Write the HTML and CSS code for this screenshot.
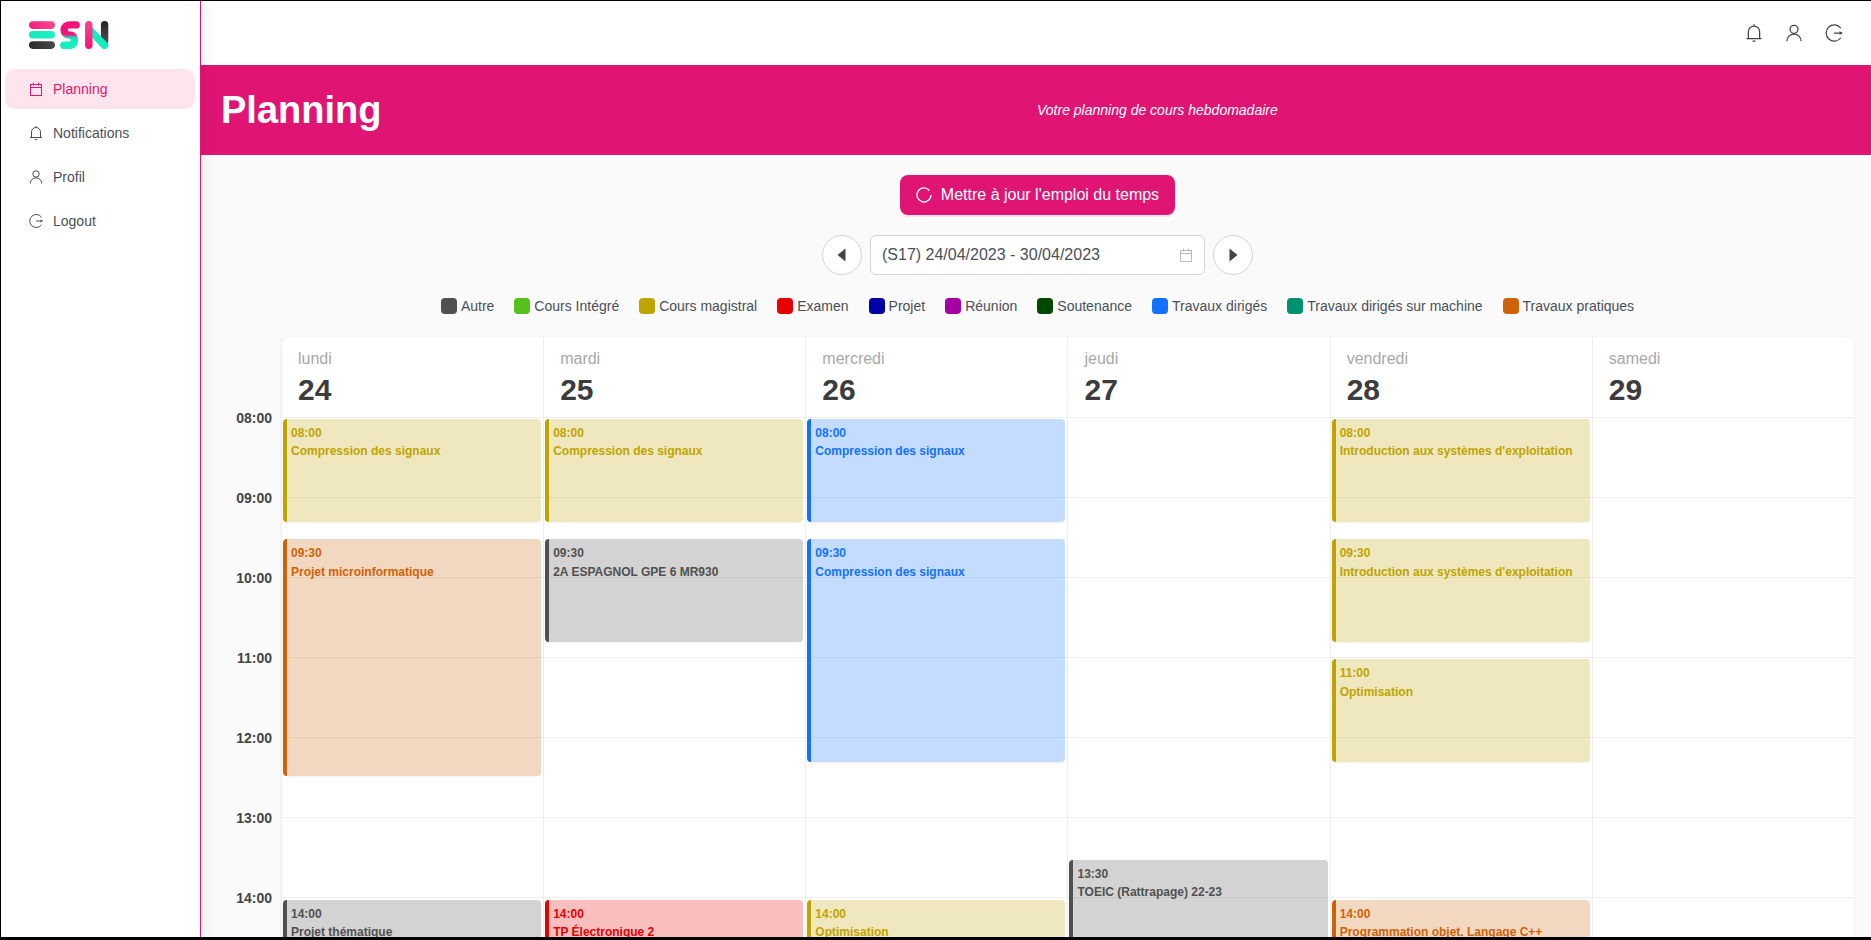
FILE: index.html
```html
<!DOCTYPE html>
<html lang="fr">
<head>
<meta charset="utf-8">
<title>Planning</title>
<link rel="stylesheet" href="styles.css">
</head>
<body>
<div class="frame">
  <aside class="sidebar">
    <div class="logo">
      <svg width="80" height="29" viewBox="0 0 80 29">
        <defs>
          <linearGradient id="gp" x1="0" x2="1" y1="0" y2="0"><stop offset="0" stop-color="#f4207f"/><stop offset="1" stop-color="#f5478f"/></linearGradient>
          <linearGradient id="gt" x1="0" x2="1" y1="0" y2="0"><stop offset="0" stop-color="#14e8bb"/><stop offset="1" stop-color="#1cf0c8"/></linearGradient>
          <linearGradient id="gd" x1="0" x2="1" y1="0" y2="0"><stop offset="0" stop-color="#2a2a2a"/><stop offset="1" stop-color="#4a4a4a"/></linearGradient>
          <linearGradient id="gs" gradientUnits="userSpaceOnUse" x1="40" x2="40" y1="2" y2="27"><stop offset="0" stop-color="#f5127a"/><stop offset=".45" stop-color="#f5127a"/><stop offset=".6" stop-color="#14e8bb"/><stop offset="1" stop-color="#14f0c4"/></linearGradient>
          <linearGradient id="gn" gradientUnits="userSpaceOnUse" x1="60" x2="60" y1="0" y2="28"><stop offset="0" stop-color="#f5478f"/><stop offset="1" stop-color="#f5127a"/></linearGradient>
          <linearGradient id="gk" gradientUnits="userSpaceOnUse" x1="76" x2="76" y1="0" y2="24"><stop offset="0" stop-color="#222"/><stop offset="1" stop-color="#555"/></linearGradient>
        </defs>
        <rect x="0" y="0.3" width="26" height="7.6" rx="3.8" fill="url(#gp)"/>
        <rect x="0" y="10" width="26" height="7.6" rx="3.8" fill="url(#gt)"/>
        <rect x="0" y="20.3" width="26" height="7.6" rx="3.8" fill="url(#gd)"/>
        <path d="M47.2 3.9 H40.2 a5.1 5.1 0 0 0 0 10.2 h1.6 a5.4 5.4 0 0 1 0 10.2 H34.8" fill="none" stroke="url(#gs)" stroke-width="7.4" stroke-linecap="round"/>
        <path d="M75.6 3.8 V20" stroke="url(#gk)" stroke-width="7.4" stroke-linecap="round"/>
        <path d="M59.8 8 L75.6 24.3" stroke="#16ecc2" stroke-width="7.4" stroke-linecap="round"/>
        <path d="M59.8 3.8 V24.3" stroke="url(#gn)" stroke-width="7.4" stroke-linecap="round"/>
      </svg>
    </div>
    <nav class="nav">
      <a class="nav-item active">
        <svg class="ico" viewBox="0 0 16 16"><rect x="2.5" y="3.5" width="11" height="11"/><path d="M2.5 6.5h11M5.5 1.5v3M10.5 1.5v3"/></svg>
        <span>Planning</span>
      </a>
      <a class="nav-item">
        <svg class="ico" viewBox="0 0 16 16"><path d="M3.5 12.5V7a4.5 4.5 0 0 1 9 0v5.5M2 12.5h12M6.8 14.5h2.4M8 1v1.5"/></svg>
        <span>Notifications</span>
      </a>
      <a class="nav-item">
        <svg class="ico" viewBox="0 0 16 16"><circle cx="8" cy="5" r="3.2"/><path d="M2.3 14.5a5.7 5.7 0 0 1 11.4 0"/></svg>
        <span>Profil</span>
      </a>
      <a class="nav-item">
        <svg class="ico" viewBox="0 0 16 16"><path d="M13.5 4.2A6.5 6.5 0 1 0 13.5 11.8M8 8h6.5"/><path d="M12.5 6.5 14.8 8l-2.3 1.5z" class="solid"/></svg>
        <span>Logout</span>
      </a>
    </nav>
  </aside>
  <main class="main">
    <header class="topbar">
      <svg class="ico top-ico" viewBox="0 0 16 16"><path d="M3.5 12.5V7a4.5 4.5 0 0 1 9 0v5.5M2 12.5h12M6.8 14.5h2.4M8 1v1.5"/></svg>
      <svg class="ico top-ico" viewBox="0 0 16 16"><circle cx="8" cy="5" r="3.2"/><path d="M2.3 14.5a5.7 5.7 0 0 1 11.4 0"/></svg>
      <svg class="ico top-ico" viewBox="0 0 16 16"><path d="M13.5 4.2A6.5 6.5 0 1 0 13.5 11.8M8 8h6.5"/><path d="M12.5 6.5 14.8 8l-2.3 1.5z" class="solid"/></svg>
    </header>
    <section class="banner">
      <h1>Planning</h1>
      <p>Votre planning de cours hebdomadaire</p>
    </section>
    <section class="content">
      <button class="update">
        <svg class="ico upd-ico" viewBox="0 0 16 16"><path d="M13.4 3.5A7 7 0 1 0 15 8"/></svg>
        <span>Mettre à jour l'emploi du temps</span>
      </button>
      <div class="week">
        <button class="round"><svg width="10" height="14" viewBox="0 0 10 14"><path d="M8.5 0.5v13L0.5 7z" fill="#444"/></svg></button>
        <div class="picker">
          <span>(S17) 24/04/2023 - 30/04/2023</span>
          <svg class="ico cal-ico" viewBox="0 0 16 16"><rect x="2.5" y="3.5" width="11" height="11"/><path d="M2.5 6.5h11M5.5 1.5v3M10.5 1.5v3"/></svg>
        </div>
        <button class="round"><svg width="10" height="14" viewBox="0 0 10 14"><path d="M1.5 0.5v13L9.5 7z" fill="#444"/></svg></button>
      </div>
      <ul class="legend">
        <li><i class="c-autre"></i>Autre</li>
        <li><i class="c-integre"></i>Cours Intégré</li>
        <li><i class="c-cm"></i>Cours magistral</li>
        <li><i class="c-exam"></i>Examen</li>
        <li><i class="c-projet"></i>Projet</li>
        <li><i class="c-reunion"></i>Réunion</li>
        <li><i class="c-sout"></i>Soutenance</li>
        <li><i class="c-td"></i>Travaux dirigés</li>
        <li><i class="c-tdm"></i>Travaux dirigés sur machine</li>
        <li><i class="c-tp"></i>Travaux pratiques</li>
      </ul>
      <div class="calendar">
        <div class="hours">
          <span>08:00</span><span>09:00</span><span>10:00</span><span>11:00</span><span>12:00</span><span>13:00</span><span>14:00</span>
        </div>
        <div class="grid">
          <div class="day">
            <div class="day-head"><div class="dname">lundi</div><div class="dnum">24</div></div>
            <div class="slots">
              <a class="ev cm" style="top:1px;height:103px"><b>08:00</b><b>Compression des signaux</b></a>
              <a class="ev tp" style="top:121.3px;height:237px"><b>09:30</b><b>Projet microinformatique</b></a>
              <a class="ev au" style="top:481.6px;height:200px"><b>14:00</b><b>Projet thématique</b></a>
            </div>
          </div>
          <div class="day">
            <div class="day-head"><div class="dname">mardi</div><div class="dnum">25</div></div>
            <div class="slots">
              <a class="ev cm" style="top:1px;height:103px"><b>08:00</b><b>Compression des signaux</b></a>
              <a class="ev au" style="top:121.3px;height:103px"><b>09:30</b><b>2A ESPAGNOL GPE 6 MR930</b></a>
              <a class="ev ex" style="top:481.6px;height:200px"><b>14:00</b><b>TP Électronique 2</b></a>
            </div>
          </div>
          <div class="day">
            <div class="day-head"><div class="dname">mercredi</div><div class="dnum">26</div></div>
            <div class="slots">
              <a class="ev td" style="top:1px;height:103px"><b>08:00</b><b>Compression des signaux</b></a>
              <a class="ev td" style="top:121.3px;height:223px"><b>09:30</b><b>Compression des signaux</b></a>
              <a class="ev cm" style="top:481.6px;height:200px"><b>14:00</b><b>Optimisation</b></a>
            </div>
          </div>
          <div class="day">
            <div class="day-head"><div class="dname">jeudi</div><div class="dnum">27</div></div>
            <div class="slots">
              <a class="ev au" style="top:441.6px;height:200px"><b>13:30</b><b>TOEIC (Rattrapage) 22-23</b></a>
            </div>
          </div>
          <div class="day">
            <div class="day-head"><div class="dname">vendredi</div><div class="dnum">28</div></div>
            <div class="slots">
              <a class="ev cm" style="top:1px;height:103px"><b>08:00</b><b>Introduction aux systèmes d'exploitation</b></a>
              <a class="ev cm" style="top:121.3px;height:103px"><b>09:30</b><b>Introduction aux systèmes d'exploitation</b></a>
              <a class="ev cm" style="top:241.3px;height:103px"><b>11:00</b><b>Optimisation</b></a>
              <a class="ev tp" style="top:481.6px;height:200px"><b>14:00</b><b>Programmation objet. Langage C++</b></a>
            </div>
          </div>
          <div class="day">
            <div class="day-head"><div class="dname">samedi</div><div class="dnum">29</div></div>
            <div class="slots"></div>
          </div>
        </div>
      </div>
    </section>
  </main>
</div>
</body>
</html>
```
FILE: styles.css
```css
* { box-sizing: border-box; }
html, body { margin: 0; height: 100%; overflow: hidden; }
body { background: #000; font-family: "Liberation Sans", Arial, sans-serif; color: #495057; }
.frame { display: flex; height: 936px; margin: 1px 0 0 1px; background: #fff; overflow: hidden; }
.sidebar { flex: 0 0 200px; width: 200px; background: #fff; border-right: 1px solid #e0146f; position: relative; z-index: 1; box-shadow: 4px 0 14px rgba(0,0,0,.07); }
.logo { padding: 20px 0 0 28px; height: 68px; }
.logo svg { display: block; }
.nav { display: flex; flex-direction: column; gap: 4px; padding: 0 5px 0 4px; }
.nav-item { display: flex; align-items: center; gap: 9px; height: 40px; padding: 0 0 0 23px; border-radius: 10px; font-size: 14px; color: #495057; }
.nav-item.active { background: #fee5ed; color: #e31573; }
.ico { width: 16px; height: 16px; fill: none; stroke: currentColor; stroke-width: 1; flex: none; }
.ico .solid { fill: currentColor; stroke: none; }
.main { flex: 1; min-width: 0; background: #fafafa; display: flex; flex-direction: column; }
.topbar { flex: 0 0 64px; background: #fff; display: flex; align-items: center; justify-content: flex-end; gap: 20px; padding-right: 27px; }
.top-ico { width: 20px; height: 20px; color: #444; stroke-width: 1; }
.banner { flex: 0 0 90px; background: #e01573; display: flex; align-items: center; color: #fff; padding-left: 20px; }
.banner h1 { margin: 0; font-size: 38px; font-weight: 700; flex: 0 0 816px; }
.banner p { margin: 0; font-size: 14px; font-style: italic; }
.content { flex: 1; display: flex; flex-direction: column; align-items: center; padding-top: 20px; }
.update { display: flex; align-items: center; gap: 9px; height: 40px; margin-left: 3px; padding: 0 16px; background: #e01573; color: #fff; border: 0; border-radius: 8px; font: 16px "Liberation Sans", Arial, sans-serif; box-shadow: 0 2px 0 #fde3ed; }
.upd-ico { stroke-width: 1.3; }
.week { display: flex; align-items: center; gap: 8px; margin: 20px 0 0 3px; }
.round { width: 40px; height: 40px; border-radius: 50%; border: 1px solid #d4d4d4; background: #fff; display: flex; align-items: center; justify-content: center; padding: 0; }
.picker { width: 335px; height: 40px; background: #fff; border: 1px solid #d4d4d4; border-radius: 6px; display: flex; align-items: center; justify-content: space-between; padding: 0 10px 0 11px; font-size: 16px; color: #495057; }
.cal-ico { color: #bbb; }
.legend { display: flex; gap: 20px; list-style: none; margin: 23px 0 0 3px; padding: 0; font-size: 14px; color: #495057; }
.legend li { display: flex; align-items: center; gap: 4px; height: 16px; }
.legend i { display: block; width: 16px; height: 16px; border-radius: 4px; }
.c-autre { background: #505050; }
.c-integre { background: #55c01e; }
.c-cm { background: #bfa400; }
.c-exam { background: #e60000; }
.c-projet { background: #0000a4; }
.c-reunion { background: #a400a4; }
.c-sout { background: #004700; }
.c-td { background: #1272ff; }
.c-tdm { background: #00916e; }
.c-tp { background: #cf6207; }
.calendar { align-self: stretch; display: flex; margin-top: 23px; padding-right: 17px; }
.hours { flex: 0 0 80px; padding-top: 75px; display: flex; flex-direction: column; align-items: flex-end; padding-right: 9px; font-size: 14px; font-weight: 700; color: #444; }
.hours span { height: 80px; line-height: 14px; margin-top: -1px; margin-bottom: 1px; }
.grid { flex: 1; display: grid; grid-template-columns: repeat(6, 1fr); background: #fff; border-radius: 10px 10px 0 0; box-shadow: 0 0 2px rgba(0,0,0,.08); }
.day { border-left: 1px solid #eee; min-width: 0; }
.day-head { height: 81px; padding: 12px 0 0 16px; border-bottom: 1px solid #eee; }
.dname { font-size: 16px; line-height: 20px; color: #a8a8a8; }
.dnum { font-size: 30px; font-weight: 700; line-height: 32px; color: #3c3c3c; margin-top: 5px; }
.slots { position: relative; height: 640px; background-image: repeating-linear-gradient(to bottom, transparent 0, transparent 79px, #eee 79px, #eee 80px); }
.ev { position: absolute; left: 1px; right: 2px; border-left: 4px solid; border-radius: 4px; padding: 7px 0 0 4px; font-size: 12px; display: flex; flex-direction: column; gap: 4.4px; line-height: 14px; box-shadow: 0 1px 2px rgba(0,0,0,.06); overflow: hidden; }
.ev b { font-weight: 700; display: block; white-space: nowrap; }
.cm { background: rgba(191,164,0,.25); border-color: #bfa400; color: #bfa400; }
.tp { background: rgba(207,98,7,.25); border-color: #cf6207; color: #cf6207; }
.au { background: rgba(80,80,80,.25); border-color: #505050; color: #505050; }
.ex { background: rgba(230,0,0,.25); border-color: #e60000; color: #e60000; }
.td { background: rgba(18,114,255,.25); border-color: #1272ff; color: #1272ff; }
```
